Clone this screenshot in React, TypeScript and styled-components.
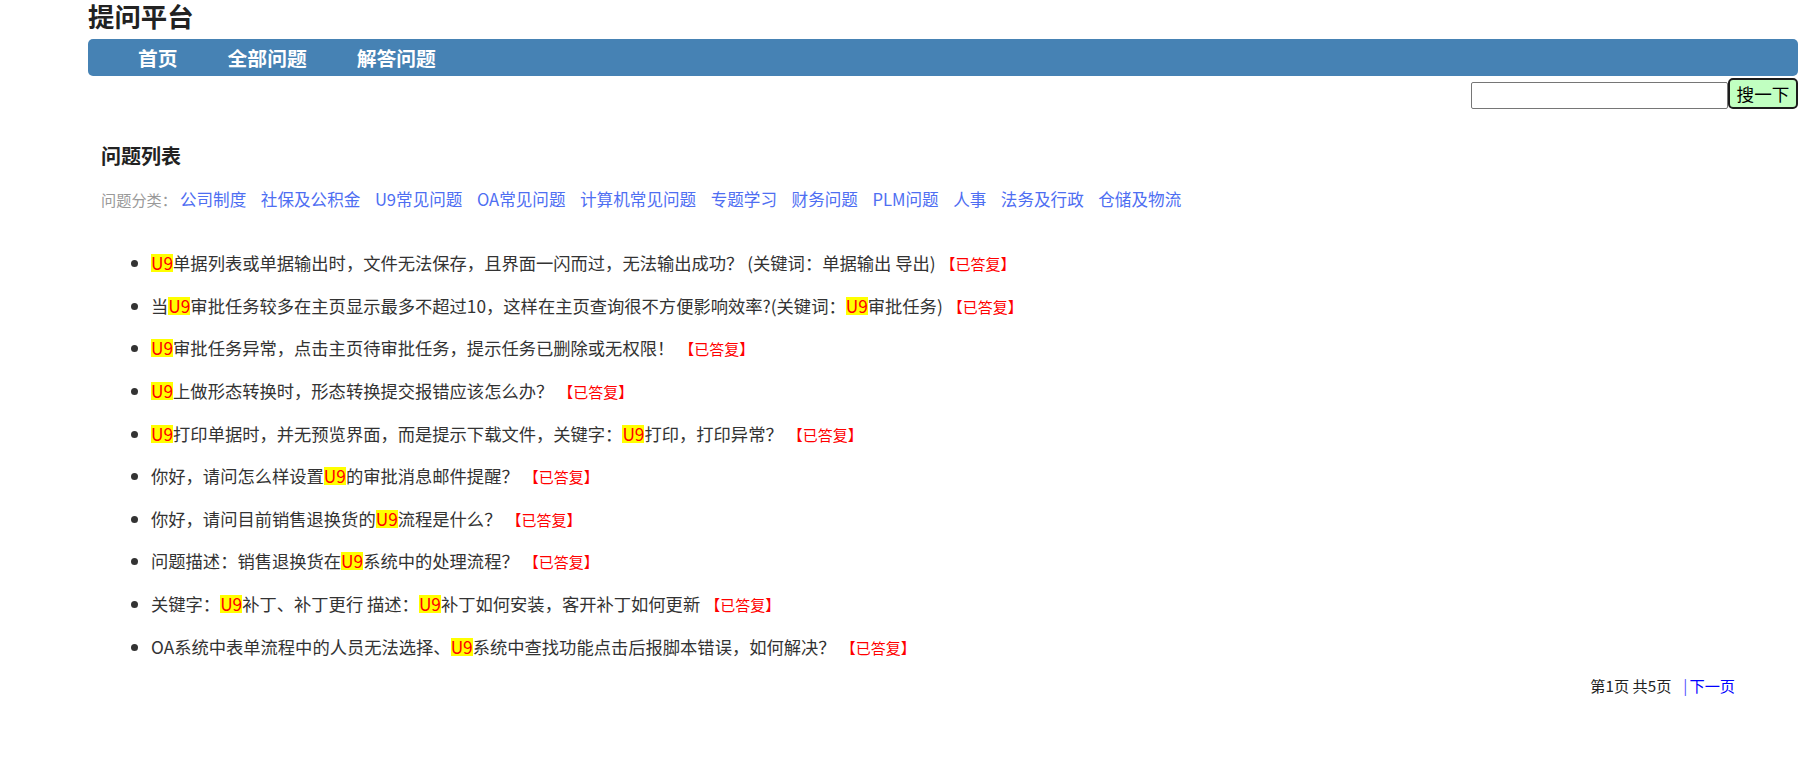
import React from 'react';
import styled, { createGlobalStyle } from 'styled-components';

const GlobalStyle = createGlobalStyle`
  body {
    margin: 0;
    background: #fff;
    font-family: "Noto Sans CJK SC", "Noto Sans", sans-serif;
    color: #333;
  }
`;

const Page = styled.div`
  padding: 0 9px 40px 88px;
`;

const Title = styled.h1`
  margin: 0;
  font-size: 26.4px;
  line-height: 32px;
  font-weight: bold;
  color: #222;
`;

const NavBar = styled.ul`
  display: flex;
  gap: 50px;
  margin: 7px 0 0;
  padding: 0 0 0 50px;
  height: 37px;
  list-style: none;
  background: #4682b4;
  border-radius: 5px;
`;

const NavItem = styled.li`
  font-size: 19.8px;
  line-height: 37px;
  font-weight: bold;
  color: #fff;
  cursor: pointer;
`;

const SearchRow = styled.div`
  display: flex;
  justify-content: flex-end;
  align-items: flex-end;
  margin-top: 2px;
`;

const SearchInput = styled.input`
  box-sizing: border-box;
  width: 257px;
  height: 27px;
  border: 1px solid #767676;
  border-radius: 2px;
  padding: 0 4px;
  margin: 0;
`;

const SearchButton = styled.button`
  box-sizing: border-box;
  width: 70px;
  height: 31px;
  margin: 0;
  padding: 0;
  border: 2px solid #1c1c1c;
  border-radius: 5px;
  background: #c1ffc1;
  font-family: "Noto Sans CJK SC", sans-serif;
  font-size: 17.6px;
  line-height: 27px;
  color: #000;
`;

const Section = styled.div`
  padding-left: 13px;
`;

const SectionTitle = styled.h3`
  margin: 33px 0 0;
  font-size: 20px;
  line-height: 28px;
  font-weight: bold;
  color: #222;
`;

const Categories = styled.div`
  display: flex;
  align-items: center;
  margin-top: 17px;
  line-height: 24px;
`;

const CategoryLabel = styled.span`
  font-size: 15.2px;
  color: #999;
  margin-right: 3px;
`;

const CategoryLink = styled.a`
  font-size: 16.6px;
  color: #4e6ef2;
  text-decoration: none;
  margin-right: 14.5px;
`;

const QuestionList = styled.ul`
  margin: 31px 0 0;
  padding-left: 50px;
  list-style: disc;
`;

const QuestionItem = styled.li`
  font-size: 17.3px;
  line-height: 42.64px;
  color: #333;
`;

const Keyword = styled.span`
  display: inline-block;
  line-height: 18px;
  height: 18px;
  background: #ffff00;
  color: #ff0000;
`;

const AnsweredTag = styled.span`
  font-size: 15px;
  line-height: 1;
  color: #ff0000;
  margin-left: 5px;
`;

const Pager = styled.div`
  display: flex;
  justify-content: flex-end;
  align-items: center;
  margin: 7px 63px 0 0;
  font-size: 15.2px;
  line-height: 20px;
  color: #222;
`;

const PagerDivider = styled.span`
  color: #5050ff;
  margin: 0 2px 0 12px;
`;

const PagerLink = styled.a`
  color: #0000ff;
  text-decoration: none;
`;

const navItems = ['首页', '全部问题', '解答问题'];

const categories = [
  '公司制度',
  '社保及公积金',
  'U9常见问题',
  'OA常见问题',
  '计算机常见问题',
  '专题学习',
  '财务问题',
  'PLM问题',
  '人事',
  '法务及行政',
  '仓储及物流',
];

const questions = [
  'U9单据列表或单据输出时，文件无法保存，且界面一闪而过，无法输出成功？ (关键词：单据输出 导出)',
  '当U9审批任务较多在主页显示最多不超过10，这样在主页查询很不方便影响效率?(关键词：U9审批任务)',
  'U9审批任务异常，点击主页待审批任务，提示任务已删除或无权限！',
  'U9上做形态转换时，形态转换提交报错应该怎么办？',
  'U9打印单据时，并无预览界面，而是提示下载文件，关键字：U9打印，打印异常？',
  '你好，请问怎么样设置U9的审批消息邮件提醒？',
  '你好，请问目前销售退换货的U9流程是什么？',
  '问题描述：销售退换货在U9系统中的处理流程？',
  '关键字：U9补丁、补丁更行 描述：U9补丁如何安装，客开补丁如何更新',
  'OA系统中表单流程中的人员无法选择、U9系统中查找功能点击后报脚本错误，如何解决？',
];

// highlight every "U9" in a question
const highlight = (text: string) => {
  const parts = text.split('U9');
  return parts.map((part, i) => (
    <React.Fragment key={i}>
      {i > 0 && <Keyword>U9</Keyword>}
      {part}
    </React.Fragment>
  ));
};

const App: React.FC = () => (
  <Page>
    <GlobalStyle />
    <Title>提问平台</Title>

    <NavBar>
      {navItems.map((item) => (
        <NavItem key={item}>{item}</NavItem>
      ))}
    </NavBar>

    <SearchRow>
      <SearchInput type="text" />
      <SearchButton>搜一下</SearchButton>
    </SearchRow>

    <Section>
      <SectionTitle>问题列表</SectionTitle>

      <Categories>
        <CategoryLabel>问题分类：</CategoryLabel>
        {categories.map((c) => (
          <CategoryLink key={c} href="#">
            {c}
          </CategoryLink>
        ))}
      </Categories>

      <QuestionList>
        {questions.map((q) => (
          <QuestionItem key={q}>
            {highlight(q)}
            <AnsweredTag>【已答复】</AnsweredTag>
          </QuestionItem>
        ))}
      </QuestionList>

      <Pager>
        <span>第1页 共5页</span>
        <PagerDivider>|</PagerDivider>
        <PagerLink href="#">下一页</PagerLink>
      </Pager>
    </Section>
  </Page>
);

export default App;
